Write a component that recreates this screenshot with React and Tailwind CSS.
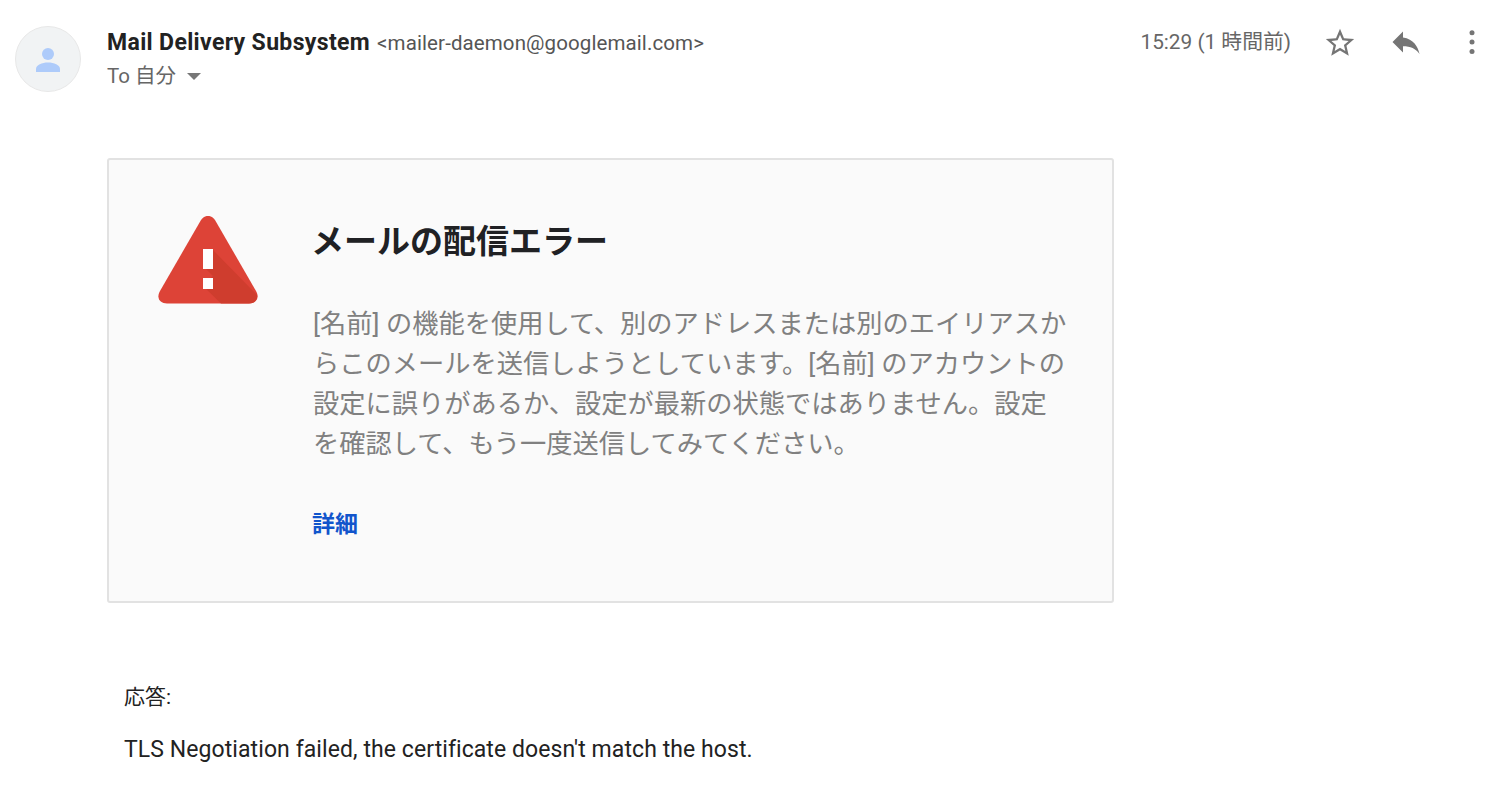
import React from 'react';

const jp = "font-['Roboto','Noto_Sans_CJK_JP',sans-serif]";

const Avatar = () => (
  <div className="w-[66px] h-[66px] rounded-full bg-[#f1f3f4] border border-[#e8e8e8] flex items-center justify-center shrink-0">
    <svg width="26" height="28" viewBox="0 0 26 28">
      <circle cx="13" cy="9" r="6" fill="#aecbfa" />
      <path d="M1 27v-3c0-4 6-6.500 12-6.500s12 2.500 12 6.500v3z" fill="#aecbfa" />
    </svg>
  </div>
);

const WarningIcon = () => (
  <svg width="100" height="88" viewBox="0 0 100 88">
    <path d="M43 4 L2 75 C-2 82 2 87.500 9 87.500 H91 C98 87.500 102 82 98 75 L57 4 C53 -1.500 47 -1.500 43 4 Z" fill="#dd4337" />
    <path d="M55 34 L99 79 C100 84 96 87.500 91 87.500 H63 L45 70 L55 60 L45 50 Z" fill="#cf3d2e" />
    <rect x="45" y="33" width="10" height="20" fill="#fff" />
    <rect x="45" y="62" width="10" height="11" fill="#fff" />
  </svg>
);

export default function App() {
  return (
    <div className={`${jp} w-[1500px] h-[785px] overflow-hidden bg-white text-[#222]`}>
      <div className="flex pl-[15px] pr-[13px] pt-[26px]">
        <Avatar />
        <div className="ml-[26px] flex-1 pt-[2px]">
          <div className="flex items-baseline h-[30px] leading-[30px]">
            <span className="text-[23px] font-bold tracking-[0.35px] text-[#222]">Mail Delivery Subsystem</span>
            <span className="ml-[7px] text-[20.5px] tracking-[0.1px] text-[#555]">&lt;mailer-daemon@googlemail.com&gt;</span>
          </div>
          <div className="flex items-center h-[30px] mt-[3px] text-[20.5px] text-[#666]">
            <span>To 自分</span>
            <span className="ml-[11px] w-0 h-0 border-x-[7px] border-x-transparent border-t-[7px] border-t-[#777]" />
          </div>
        </div>
        <div className="flex items-start pt-[1px]">
          <span className="text-[20.8px] leading-[30px] text-[#666]">15:29 (1 時間前)</span>
          <svg className="ml-[32px] -mt-[1px]" width="34" height="34" viewBox="0 0 24 24" fill="#757575">
            <path d="M22 9.240l-7.190-.620L12 2 9.190 8.630 2 9.240l5.460 4.730L5.820 21 12 17.270 18.180 21l-1.630-7.030L22 9.240zM12 15.400l-3.760 2.270 1-4.280-3.320-2.880 4.380-.380L12 6.100l1.710 4.040 4.380.380-3.320 2.880 1 4.280L12 15.400z" />
          </svg>
          <svg className="ml-[31px] -mt-[3px]" width="36" height="36" viewBox="0 0 24 24" fill="#757575">
            <path d="M10 9V5l-7 7 7 7v-4.100c5 0 8.500 1.600 11 5.100-1-5-4-10-11-11z" />
          </svg>
          <svg className="ml-[33px]" width="30" height="30" viewBox="0 0 24 24" fill="#757575">
            <circle cx="12" cy="4.500" r="2" />
            <circle cx="12" cy="12" r="2" />
            <circle cx="12" cy="19.500" r="2" />
          </svg>
        </div>
      </div>

      <div className="ml-[107px] mt-[66px] w-[1007px] h-[445px] bg-[#fafafa] border-2 border-[#e2e2e2] rounded-[3px] flex">
        <div className="ml-[49px] mt-[56px] shrink-0">
          <WarningIcon />
        </div>
        <div className="ml-[55px] mt-[58px] w-[780px]">
          <h1 className="-ml-[2px] text-[33px] leading-[48px] font-bold text-[#202124]">メールの配信エラー</h1>
          <p className="mt-[38px] text-[26.25px] leading-[40px] text-[#808080] whitespace-nowrap">
            [名前] の機能を使用して、別のアドレスまたは別のエイリアスか<br />
            らこのメールを送信しようとしています。[名前] のアカウントの<br />
            設定に誤りがあるか、設定が最新の状態ではありません。設定<br />
            を確認して、もう一度送信してみてください。
          </p>
          <a className="block -ml-[1px] mt-[45px] text-[23px] leading-[32px] font-bold text-[#1155cc]">詳細</a>
        </div>
      </div>

      <div className="ml-[124px] mt-[79px] text-[#222]">
        <p className="text-[21px] leading-[30px]">応答:</p>
        <p className="mt-[23px] text-[23px] tracking-[0.08px] leading-[30px]">TLS Negotiation failed, the certificate doesn't match the host.</p>
      </div>
    </div>
  );
}
